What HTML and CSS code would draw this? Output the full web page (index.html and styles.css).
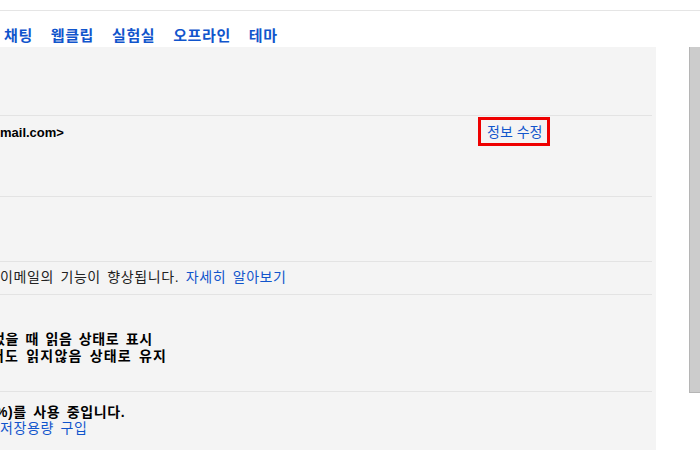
FILE: index.html
```html
<!DOCTYPE html>
<html lang="ko">
  <head>
    <meta charset="UTF-8" />
    <meta name="viewport" content="width=device-width, initial-scale=1.0" />
    <title>설정</title>
    <link rel="stylesheet" href="styles.css">
  </head>
  <body>
    <!-- Top strip -->
    <div class="topbar"></div>

    <!-- Settings tabs -->
    <nav class="tabs">
      <a class="tab">채팅</a>
      <a class="tab">웹클립</a>
      <a class="tab">실험실</a>
      <a class="tab">오프라인</a>
      <a class="tab">테마</a>
    </nav>

    <div class="main">
      <!-- Settings panel -->
      <div class="panel">
        <div class="row row-head"></div>

        <div class="row row-account">
          <div class="cell-left bold">mail.com&gt;</div>
          <div class="cell-right">
            <a class="edit-link">정보 수정</a>
          </div>
        </div>

        <div class="row row-empty"></div>

        <div class="row row-info ko">
          이메일의 기능이 향상됩니다. <a class="link">자세히 알아보기</a>
        </div>

        <div class="row row-read ko bold">
          <div class="clip-8">었을 때 읽음 상태로 표시</div>
          <div class="clip-9 wide">어도 읽지않음 상태로 유지</div>
        </div>

        <div class="row row-storage ko">
          <div class="bold clip-5">%)를 사용 중입니다.</div>
          <a class="link">저장용량 구입</a>
        </div>
      </div>

      <!-- Scrollbar -->
      <div class="track">
        <div class="thumb"></div>
      </div>
    </div>
  </body>
</html>
```

FILE: styles.css
```css
body {
  margin: 0;
  padding: 0;
  font-family: "Liberation Sans", Arial, "Noto Sans CJK KR", sans-serif;
  font-size: 13px;
  color: #222;
  background: #fff;
  overflow: hidden;
  width: 700px;
  height: 450px;
}
a {
  color: #15c;
  text-decoration: none;
  cursor: pointer;
}
.bold {
  font-weight: bold;
  color: #000;
}
.topbar {
  height: 10px;
  border-bottom: 1px solid #e5e5e5;
}
.tabs {
  display: flex;
  gap: 18px;
  padding: 16px 0 2px 4px;
  line-height: 18px;
}
.tab {
  font-size: 15px;
  font-weight: bold;
  letter-spacing: 0.6px;
  color: #15c;
}
.main {
  display: flex;
  justify-content: space-between;
}
.panel {
  width: 656px;
  height: 403px;
  padding-right: 4px;
  box-sizing: border-box;
  background: #f4f4f4;
}
.row {
  box-sizing: border-box;
  border-bottom: 1px solid #e3e3e3;
  line-height: 17px;
  white-space: nowrap;
  overflow: hidden;
}
.ko {
  font-size: 14px;
  letter-spacing: 0.6px;
  word-spacing: 2px;
}
.row-head {
  height: 69px;
}
.row-account {
  height: 81px;
  display: flex;
  padding-top: 8px;
  overflow: visible;
}
.cell-left {
  width: 478px;
}
.edit-link {
  display: inline-block;
  margin-top: -7px;
  padding: 4px 5px 2px 6px;
  border: 3px solid #e00;
  font-size: 14px;
}
.row-empty {
  height: 65px;
}
.row-info {
  height: 33px;
  padding-top: 7px;
}
.row-read {
  height: 97px;
  padding-top: 36px;
}
.row-read .wide {
  letter-spacing: 1.2px;
}
.row-storage {
  border-bottom: none;
  padding-top: 12px;
  line-height: 16px;
}
.clip-5 {
  margin-left: -5px;
}
.clip-8 {
  margin-left: -8px;
}
.clip-9 {
  margin-left: -9px;
}
.track {
  width: 11px;
}
.thumb {
  height: 346px;
  box-sizing: border-box;
  background: #ccc;
  border-left: 1px solid #b5b5b5;
  border-bottom: 1px solid #b5b5b5;
}
```
